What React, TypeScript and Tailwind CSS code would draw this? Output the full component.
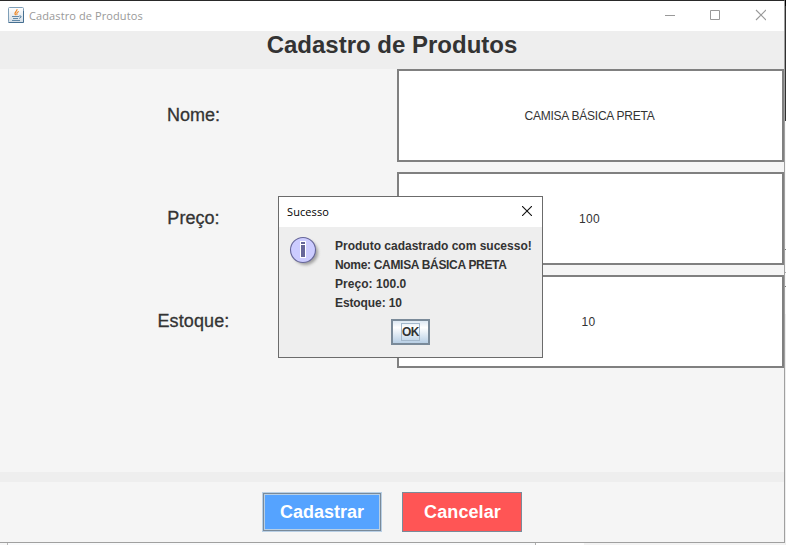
import React from "react";

const fields = [
  { label: "Nome:", value: "CAMISA BÁSICA PRETA", spacing: "tracking-[-0.24px]", labelSpacing: "tracking-[0px]" },
  { label: "Preço:", value: "100", spacing: "tracking-[0.4px]", labelSpacing: "tracking-[0.05px]" },
  { label: "Estoque:", value: "10", spacing: "tracking-[0.4px] pr-[4px]", labelSpacing: "tracking-[0.12px]" },
];

const message = [
  { text: "Produto cadastrado com sucesso!", spacing: "tracking-[0px]" },
  { text: "Nome: CAMISA BÁSICA PRETA", spacing: "tracking-[-0.32px]" },
  { text: "Preço: 100.0", spacing: "tracking-[0.05px]" },
  { text: "Estoque: 10", spacing: "tracking-[-0.1px]" },
];

function JavaIcon() {
  return (
    <svg width="16" height="16" viewBox="0 0 16 16" fill="none" className="-translate-y-px">
      <defs>
        <linearGradient id="java-bg" x1="0" y1="0" x2="0" y2="1">
          <stop offset="0" stopColor="#ffffff" />
          <stop offset="1" stopColor="#d3dde6" />
        </linearGradient>
      </defs>
      <rect x="0.5" y="0.5" width="15" height="15" rx="1" fill="url(#java-bg)" stroke="#7f9fb8" />
      <path d="M0.5 15.5H15.5V4" stroke="#456f91" />
      <path d="M9 2.2C9.6 4.2 5.2 5.2 7.6 8.2M10.8 4.6C8.4 5.4 8.6 6.4 9 8.2" stroke="#ee8420" strokeWidth="1.1" />
      <path d="M4 9.5H11M5 11.5H10M4 13.5H12M11.2 9H13V10.2L11.2 11.5" stroke="#557f9f" strokeWidth="0.9" />
    </svg>
  );
}

function InfoIcon() {
  return (
    <svg width="32" height="32" viewBox="0 0 32 32" fill="none" className="-translate-y-px">
      <defs>
        <filter id="info-shadow" x="-20%" y="-20%" width="150%" height="150%">
          <feGaussianBlur stdDeviation="1.4" />
        </filter>
      </defs>
      <circle cx="16.5" cy="16.5" r="12.5" fill="#777777" opacity="0.65" filter="url(#info-shadow)" />
      <circle cx="14" cy="14" r="12.5" fill="#ccccff" stroke="#666699" strokeWidth="1.1" />
      <path d="M11 5H17V22H11Z" fill="#ffffff" />
      <path d="M12 6H16V8H12ZM12 9H16V21H12Z" fill="#666699" />
    </svg>
  );
}

function Dialog() {
  return (
    <div className="absolute left-[278px] top-[196px] flex h-[162px] w-[265px] flex-col border border-[#6b6b6b] bg-[#eeeeee]">
      <div className="flex h-[30px] shrink-0 items-center justify-between bg-white pl-2 pr-[10px]">
        <span className="font-['Open_Sans','Noto_Sans',sans-serif] text-[11px] leading-4 tracking-[0.1px] text-black">Sucesso</span>
        <svg width="10" height="10" viewBox="0 0 10 10" className="-translate-y-px">
          <path d="M0 0L10 10M10 0L0 10" stroke="#111111" strokeWidth="1.1" />
        </svg>
      </div>
      <div className="flex pl-[10px] pt-[10px]">
        <InfoIcon />
        <div className="ml-[14px] text-xs font-bold leading-[19px] text-[#333333]">
          {message.map((m) => (
            <p key={m.text} className={`whitespace-nowrap ${m.spacing}`}>{m.text}</p>
          ))}
        </div>
      </div>
      <button className="ml-[112px] mt-[6px] flex h-[26px] w-[39px] items-center justify-center border-2 border-[#7a8a99] bg-gradient-to-b from-[#dde8f3] via-white via-30% to-[#b8cfe5]">
        <span className="flex h-[18px] w-[19px] items-center justify-center border border-[#a3b8cc] text-xs font-bold tracking-[-0.5px] text-[#333333]">OK</span>
      </button>
    </div>
  );
}

export default function App() {
  return (
    <div className="relative flex h-[545px] w-[786px] overflow-hidden bg-[#f8f8f8] font-['Liberation_Sans',Arial,sans-serif]">
      <div className="flex h-[545px] w-[785px] flex-col">
        <div className="flex h-[543px] shrink-0 flex-col border-b border-r border-t border-b-[#a0a0a0] border-r-[#a0a0a0] border-t-[#292929] bg-[#f5f5f5]">
          <header className="flex h-[30px] shrink-0 items-center bg-white pl-2 pr-[18px]">
            <JavaIcon />
            <span className="ml-[5px] font-['Open_Sans','Noto_Sans',sans-serif] text-[11px] leading-4 tracking-[0.1px] text-[#999999]">Cadastro de Produtos</span>
            <svg className="ml-auto -translate-y-px" width="102" height="12" viewBox="0 0 102 12" fill="none" stroke="#999999">
              <path d="M1 6.5H11" />
              <path d="M46.5 1.5H55.5V10.5H46.5Z" />
              <path d="M92 1L102 11M102 1L92 11" strokeWidth="1.1" />
            </svg>
          </header>
          <div className="flex h-[38px] shrink-0 justify-center bg-[#eeeeee]">
            <h1 className="text-2xl font-bold leading-[28px] text-[#333333]">Cadastro de Produtos</h1>
          </div>
          <main className="flex h-[403px] shrink-0 flex-col gap-[10px]">
            {fields.map((f) => (
              <div key={f.label} className="flex h-[93px] shrink-0">
                <div className={`flex w-[397px] items-center justify-center pb-[2px] pr-[10px] text-lg font-normal text-[#333333] [-webkit-text-stroke:0.3px_#333333] ${f.labelSpacing}`}>{f.label}</div>
                <div className={`flex w-[387px] items-center justify-center border-2 border-[#808080] bg-white pr-[2px] text-xs text-[#333333] ${f.spacing}`}>{f.value}</div>
              </div>
            ))}
          </main>
          <div className="h-[10px] shrink-0 bg-[#eeeeee]" />
          <footer className="flex flex-1 justify-center gap-5 pt-[10px] text-lg font-bold text-white">
            <button className="h-10 w-[120px] border border-[#b8cfe5] bg-[#55a3ff]">
              <span className="flex h-full items-center justify-center border border-[#7a8a99]">
                <span className="flex h-full w-full items-center justify-center border border-[#b8cfe5]">Cadastrar</span>
              </span>
            </button>
            <button className="flex h-10 w-[120px] items-center justify-center border border-[#7a8a99] bg-[#ff5555] pl-px tracking-[0.1px]">Cancelar</button>
          </footer>
        </div>
        <div className="flex h-[2px]">
          <div className="w-2 border-r border-[#b8b8b8] bg-[#f8f8f8]" />
          <div className="w-[528px] border-r border-[#b0b0b0] bg-[#f9fafb]" />
          <div className="w-12 bg-white" />
          <div className="flex-1 bg-[#f3f3f3]" />
        </div>
      </div>
      <div className="flex w-px flex-col">
        <div className="h-[6px] bg-black" />
        <div className="h-[115px] bg-[#303030]" />
        <div className="h-[128px] bg-[#f8f8f8]" />
        <div className="h-px bg-[#777777]" />
        <div className="h-[22px] bg-[#f8f8f8]" />
        <div className="h-px bg-[#aaaaaa]" />
        <div className="h-[13px] bg-[#f8f8f8]" />
        <div className="h-px bg-[#777777]" />
        <div className="h-[27px] bg-[#f8f8f8]" />
        <div className="flex-1 bg-[#ededed]" />
      </div>
      <Dialog />
    </div>
  );
}
